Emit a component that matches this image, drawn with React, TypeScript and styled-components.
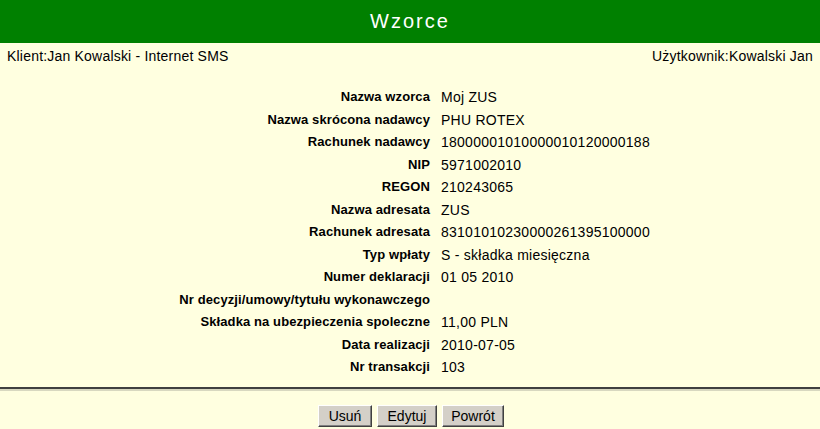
import React from "react";
import styled, { createGlobalStyle } from "styled-components";

const Global = createGlobalStyle`
  html, body { margin: 0; padding: 0; background: #ffffe0; }
  body { font-family: "Liberation Sans", Arial, sans-serif; font-size: 14px; color: #000; }
`;

const Page = styled.div`
  width: 820px;
  height: 429px;
  background: #ffffe0;
  display: flex;
  flex-direction: column;
  overflow: hidden;
`;

const Header = styled.div`
  height: 43px;
  background: #008000;
  color: #fff;
  display: flex;
  align-items: center;
  justify-content: center;
  font-size: 20px;
  letter-spacing: 2px;
  padding-bottom: 1px;
  box-sizing: border-box;
`;

const InfoBar = styled.div`
  display: flex;
  justify-content: space-between;
  padding: 4px 7px 0 7px;
  font-size: 14px;
  letter-spacing: 0.2px;
  height: 18px;
  line-height: 18px;
`;

const Details = styled.div`
  display: grid;
  grid-template-columns: 441px 1fr;
  margin-top: 21px;
`;

const Label = styled.div`
  text-align: right;
  font-weight: bold;
  font-size: 13px;
  letter-spacing: 0.1px;
  padding-right: 11px;
  height: 22.5px;
  line-height: 22.5px;
  white-space: nowrap;
`;

const Value = styled.div`
  font-size: 14px;
  letter-spacing: 0.25px;
  height: 22.5px;
  line-height: 22.5px;
  white-space: nowrap;
`;

const Separator = styled.div`
  margin-top: 8px;
  height: 2px;
  background: #404040;
  border-bottom: 2px solid #d8d8c0;
`;

const Actions = styled.div`
  display: flex;
  justify-content: center;
  gap: 5px;
  margin-top: 14px;
  padding-left: 2px;
`;

const Button = styled.button<{ $w: number }>`
  width: ${(p) => p.$w}px;
  height: 22px;
  background: #d4d0c8;
  font-family: "Liberation Sans", Arial, sans-serif;
  font-size: 14px;
  color: #000;
  border: 1px solid;
  border-color: #ffffff #404040 #404040 #ffffff;
  box-shadow: inset -1px -1px 0 #808080, inset 1px 1px 0 #d4d0c8;
  padding: 0;
`;

const rows: [string, string][] = [
  ["Nazwa wzorca", "Moj ZUS"],
  ["Nazwa skrócona nadawcy", "PHU ROTEX"],
  ["Rachunek nadawcy", "18000001010000010120000188"],
  ["NIP", "5971002010"],
  ["REGON", "210243065"],
  ["Nazwa adresata", "ZUS"],
  ["Rachunek adresata", "83101010230000261395100000"],
  ["Typ wpłaty", "S - składka miesięczna"],
  ["Numer deklaracji", "01 05 2010"],
  ["Nr decyzji/umowy/tytułu wykonawczego", ""],
  ["Składka na ubezpieczenia spoleczne", "11,00 PLN"],
  ["Data realizacji", "2010-07-05"],
  ["Nr transakcji", "103"],
];

export default function App() {
  return (
    <Page>
      <Global />
      <Header>Wzorce</Header>
      <InfoBar>
        <span>Klient:Jan Kowalski - Internet SMS</span>
        <span>Użytkownik:Kowalski Jan</span>
      </InfoBar>
      <Details>
        {rows.map(([l, v]) => (
          <React.Fragment key={l}>
            <Label>{l}</Label>
            <Value>{v}</Value>
          </React.Fragment>
        ))}
      </Details>
      <Separator />
      <Actions>
        <Button $w={54}>Usuń</Button>
        <Button $w={60}>Edytuj</Button>
        <Button $w={62}>Powrót</Button>
      </Actions>
    </Page>
  );
}
